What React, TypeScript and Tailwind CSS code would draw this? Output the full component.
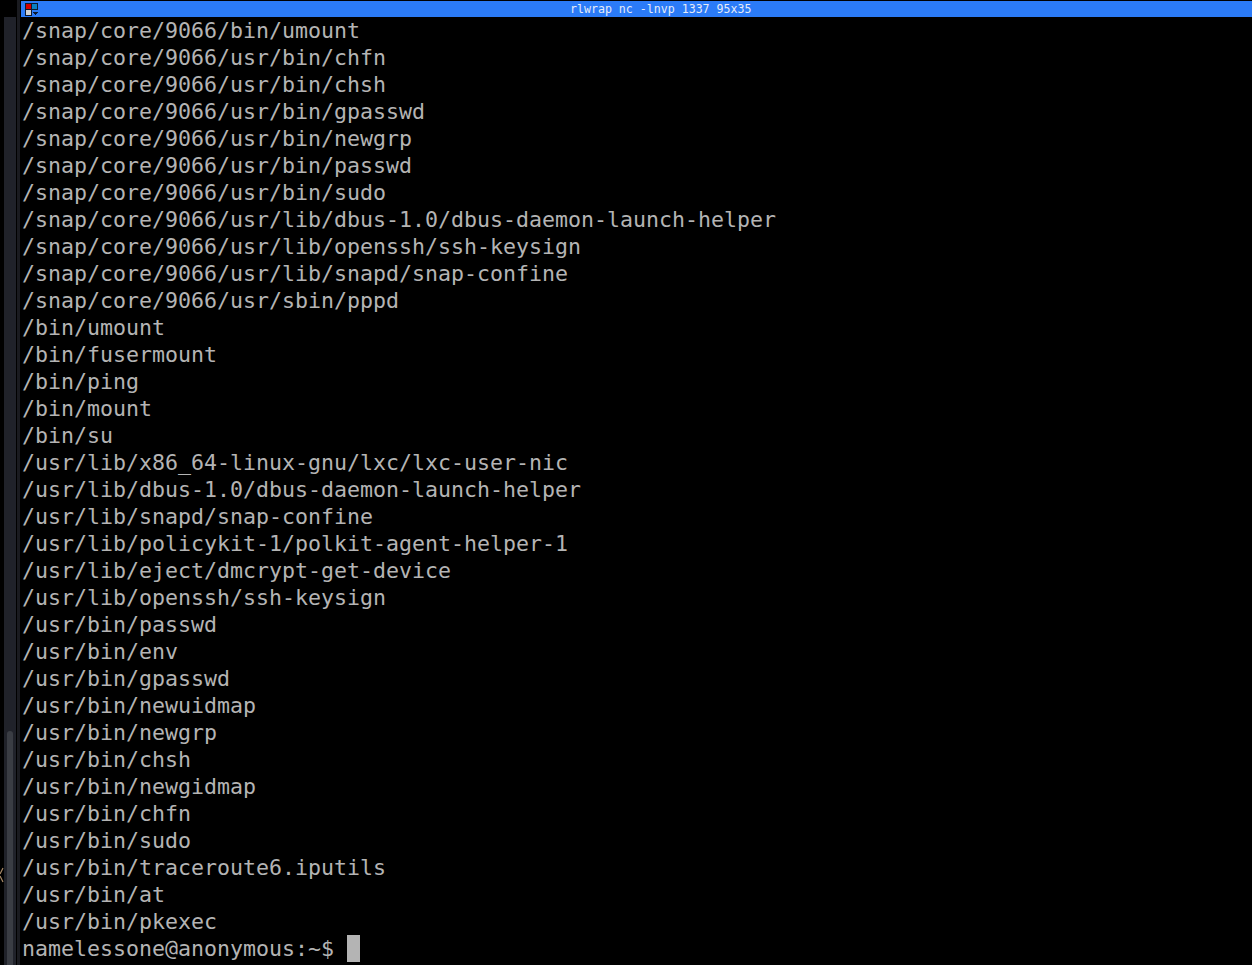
const LINES = [
  '/snap/core/9066/bin/umount',
  '/snap/core/9066/usr/bin/chfn',
  '/snap/core/9066/usr/bin/chsh',
  '/snap/core/9066/usr/bin/gpasswd',
  '/snap/core/9066/usr/bin/newgrp',
  '/snap/core/9066/usr/bin/passwd',
  '/snap/core/9066/usr/bin/sudo',
  '/snap/core/9066/usr/lib/dbus-1.0/dbus-daemon-launch-helper',
  '/snap/core/9066/usr/lib/openssh/ssh-keysign',
  '/snap/core/9066/usr/lib/snapd/snap-confine',
  '/snap/core/9066/usr/sbin/pppd',
  '/bin/umount',
  '/bin/fusermount',
  '/bin/ping',
  '/bin/mount',
  '/bin/su',
  '/usr/lib/x86_64-linux-gnu/lxc/lxc-user-nic',
  '/usr/lib/dbus-1.0/dbus-daemon-launch-helper',
  '/usr/lib/snapd/snap-confine',
  '/usr/lib/policykit-1/polkit-agent-helper-1',
  '/usr/lib/eject/dmcrypt-get-device',
  '/usr/lib/openssh/ssh-keysign',
  '/usr/bin/passwd',
  '/usr/bin/env',
  '/usr/bin/gpasswd',
  '/usr/bin/newuidmap',
  '/usr/bin/newgrp',
  '/usr/bin/chsh',
  '/usr/bin/newgidmap',
  '/usr/bin/chfn',
  '/usr/bin/sudo',
  '/usr/bin/traceroute6.iputils',
  '/usr/bin/at',
  '/usr/bin/pkexec',
];

export default function App() {
  return (
    <div className="flex h-[965px] w-[1252px] overflow-hidden bg-black">
      {/* sliver of the window behind */}
      <div className="w-[4px] shrink-0 pt-[867px]">
        <svg width="4" height="16" viewBox="0 0 4 16">
          <path d="M0 7L3 1M0 9L3 15" stroke="#a88a68" strokeWidth="1.2" fill="none" />
        </svg>
      </div>
      {/* scrollbar gutter on the left, it only starts under the title bar */}
      <div className="mt-[17px] flex w-[12px] flex-col bg-[#20222a] pt-[714px]">
        <div className="ml-[3px] w-[6px] flex-1 rounded-t-[3px] bg-[#3a3d44]" />
      </div>
      <div className="ml-[1px] h-full w-[3px] bg-[#1a1b20]" />
      <div className="ml-[1px] flex min-w-0 flex-1 flex-col">
        <div className="mt-[1px] flex h-[16px] items-center bg-[#2b7bf7] pl-[4px]">
          <svg width="13" height="13" viewBox="0 0 13 13" shapeRendering="crispEdges">
            <rect x="0" y="0" width="13" height="13" fill="#0d1a30" />
            <rect x="1" y="1" width="5" height="5" fill="#d40000" />
            <rect x="7" y="1" width="5" height="5" fill="#0a7fc4" />
            <rect x="1" y="7" width="5" height="5" fill="#cfcfcf" />
            <rect x="7" y="7" width="6" height="6" fill="#2b7bf7" />
            <path d="M8 9h5v1h-1v1h-1v1h-1v-1h-1v-1h-1z" fill="#0d1a30" />
          </svg>
          <div className="ml-[532px] whitespace-pre font-['DejaVu_Sans_Mono',monospace] text-[11.6px] leading-[16px] text-[#e6ecf8]">
            rlwrap nc -lnvp 1337 95x35
          </div>
        </div>
        <div className="pl-[1px] font-['DejaVu_Sans_Mono',monospace] text-[21.6px] leading-[27px] text-[#b4b4b4]">
          {LINES.map((line, i) => (
            <div key={i} className="h-[27px] whitespace-pre">{line}</div>
          ))}
          <div className="flex h-[27px] whitespace-pre">
            <span>namelessone@anonymous:~$ </span>
            <span className="h-[27px] w-[13px] bg-[#b4b4b4]" />
          </div>
        </div>
      </div>
    </div>
  );
}
